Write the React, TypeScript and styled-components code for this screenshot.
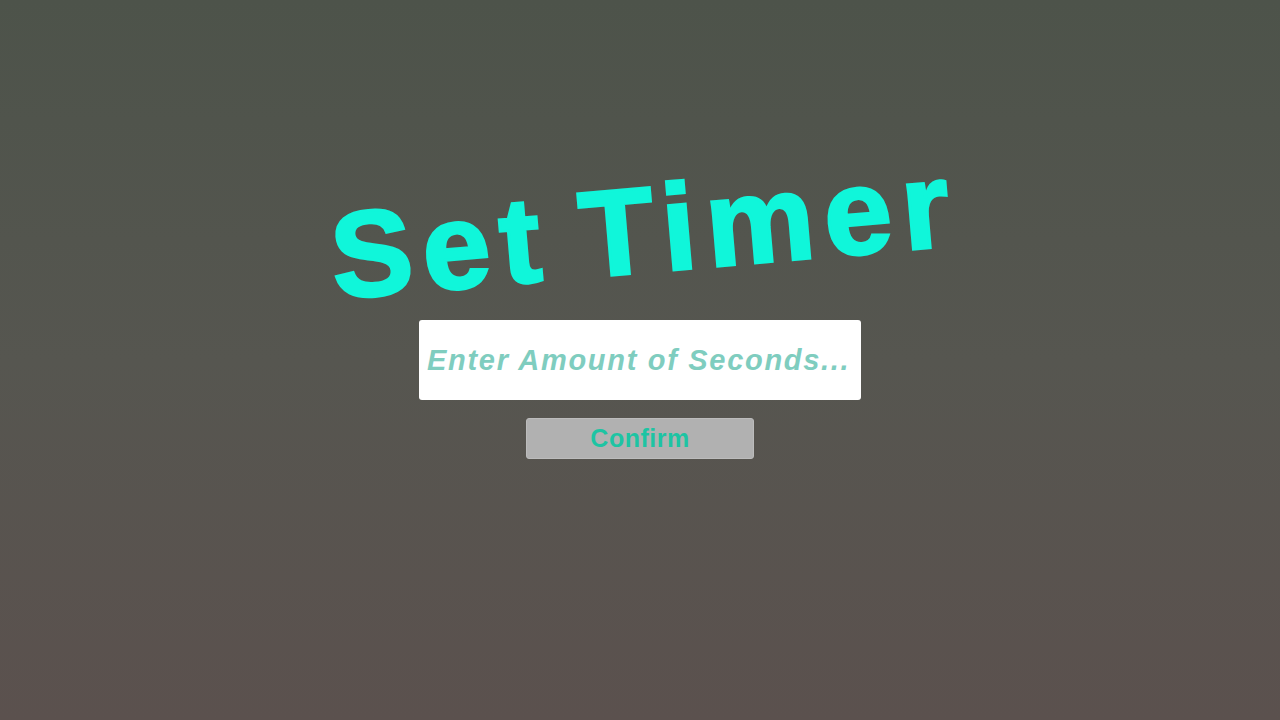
import React from "react";
import styled, { createGlobalStyle } from "styled-components";

const GlobalStyle = createGlobalStyle`
  html, body {
    margin: 0;
    padding: 0;
    height: 100%;
  }
  body {
    font-family: "Liberation Sans", Arial, sans-serif;
  }
`;

const Page = styled.main`
  box-sizing: border-box;
  width: 100%;
  min-height: 100vh;
  display: flex;
  flex-direction: column;
  align-items: center;
  padding-top: 160px;
  background: linear-gradient(180deg, #4d534a 0%, #565650 50%, #5b514e 100%);
`;

const Title = styled.h1`
  margin: 0;
  height: 140px;
  line-height: 140px;
  font-family: "Liberation Sans", Arial, sans-serif;
  font-weight: 700;
  font-size: 122px;
  letter-spacing: 10px;
  word-spacing: -14px;
  color: #10f6da;
  -webkit-text-stroke: 3px #10f6da;
  white-space: nowrap;
  transform: translateX(5px) rotate(-4.9deg);
`;

const SecondsInput = styled.input`
  box-sizing: border-box;
  margin-top: 20px;
  width: 442px;
  height: 80px;
  border: none;
  border-radius: 3px;
  background: #ffffff;
  padding: 0 8px;
  font-family: "Liberation Sans", Arial, sans-serif;
  font-size: 29px;
  font-weight: 700;
  font-style: italic;
  letter-spacing: 1.7px;
  color: #2a9d8a;
  outline: none;

  &::placeholder {
    color: #7fcdbf;
    opacity: 1;
  }
`;

const ConfirmButton = styled.button`
  box-sizing: border-box;
  margin-top: 18px;
  width: 228px;
  height: 41px;
  border: 1px solid #bcbcbc;
  border-radius: 3px;
  background: #b1b1b1;
  font-family: "Liberation Sans", Arial, sans-serif;
  font-size: 25px;
  font-weight: 700;
  letter-spacing: 0.5px;
  color: #1dc4a3;
  cursor: pointer;
  padding: 0;
`;

export default function App() {
  return (
    <>
      <GlobalStyle />
      <Page>
        <Title>Set Timer</Title>
        <SecondsInput type="text" placeholder="Enter Amount of Seconds..." />
        <ConfirmButton type="button">Confirm</ConfirmButton>
      </Page>
    </>
  );
}
